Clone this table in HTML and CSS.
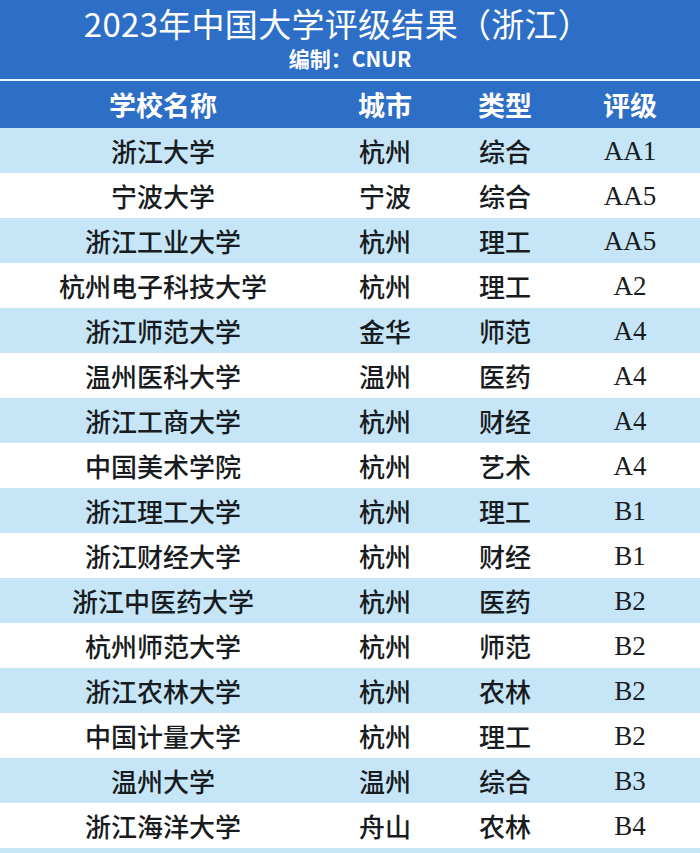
FILE: index.html
```html
<!DOCTYPE html>
<html lang="zh">
<head>
<meta charset="utf-8">
<title>2023年中国大学评级结果（浙江）</title>
<link rel="stylesheet" href="styles.css">
</head>
<body>
<div class="banner">
  <div class="title">2023年中国大学评级结果（浙江）</div>
  <div class="subtitle">编制：CNUR</div>
</div>
<div class="table">
  <div class="row head"><div class="c name">学校名称</div><div class="c city">城市</div><div class="c type">类型</div><div class="c grade">评级</div></div>
  <div class="row"><div class="c name">浙江大学</div><div class="c city">杭州</div><div class="c type">综合</div><div class="c grade">AA1</div></div>
  <div class="row"><div class="c name">宁波大学</div><div class="c city">宁波</div><div class="c type">综合</div><div class="c grade">AA5</div></div>
  <div class="row"><div class="c name">浙江工业大学</div><div class="c city">杭州</div><div class="c type">理工</div><div class="c grade">AA5</div></div>
  <div class="row"><div class="c name">杭州电子科技大学</div><div class="c city">杭州</div><div class="c type">理工</div><div class="c grade">A2</div></div>
  <div class="row"><div class="c name">浙江师范大学</div><div class="c city">金华</div><div class="c type">师范</div><div class="c grade">A4</div></div>
  <div class="row"><div class="c name">温州医科大学</div><div class="c city">温州</div><div class="c type">医药</div><div class="c grade">A4</div></div>
  <div class="row"><div class="c name">浙江工商大学</div><div class="c city">杭州</div><div class="c type">财经</div><div class="c grade">A4</div></div>
  <div class="row"><div class="c name">中国美术学院</div><div class="c city">杭州</div><div class="c type">艺术</div><div class="c grade">A4</div></div>
  <div class="row"><div class="c name">浙江理工大学</div><div class="c city">杭州</div><div class="c type">理工</div><div class="c grade">B1</div></div>
  <div class="row"><div class="c name">浙江财经大学</div><div class="c city">杭州</div><div class="c type">财经</div><div class="c grade">B1</div></div>
  <div class="row"><div class="c name">浙江中医药大学</div><div class="c city">杭州</div><div class="c type">医药</div><div class="c grade">B2</div></div>
  <div class="row"><div class="c name">杭州师范大学</div><div class="c city">杭州</div><div class="c type">师范</div><div class="c grade">B2</div></div>
  <div class="row"><div class="c name">浙江农林大学</div><div class="c city">杭州</div><div class="c type">农林</div><div class="c grade">B2</div></div>
  <div class="row"><div class="c name">中国计量大学</div><div class="c city">杭州</div><div class="c type">理工</div><div class="c grade">B2</div></div>
  <div class="row"><div class="c name">温州大学</div><div class="c city">温州</div><div class="c type">综合</div><div class="c grade">B3</div></div>
  <div class="row"><div class="c name">浙江海洋大学</div><div class="c city">舟山</div><div class="c type">农林</div><div class="c grade">B4</div></div>
  <div class="row"></div>
</div>
</body>
</html>
```
FILE: styles.css
```css
html, body {
  margin: 0;
  padding: 0;
  background: #ffffff;
}
body {
  width: 700px;
  height: 853px;
  overflow: hidden;
  font-family: "Noto Sans CJK SC", "Noto Sans", sans-serif;
  color: #181c20;
}
.banner {
  height: 79px;
  background: #2d6ec6;
  color: #ffffff;
  display: flex;
  flex-direction: column;
  align-items: center;
  border-bottom: 2px solid #e9f3fb;
}
.title {
  font-size: 33px;
  line-height: 36px;
  margin-top: 5px;
  margin-left: -25px;
  font-weight: 400;
  letter-spacing: 0.3px;
}
.subtitle {
  font-size: 21px;
  line-height: 22px;
  margin-top: 6px;
  font-weight: 700;
  font-family: "Noto Sans CJK SC", "Liberation Sans", sans-serif;
}
.table {
  display: flex;
  flex-direction: column;
}
.row {
  display: grid;
  grid-template-columns: 326px 118px 122px 128px 6px;
  height: 45px;
  align-items: center;
  font-size: 26px;
  font-weight: 500;
}
.row:nth-child(even) {
  background: #c6e6f8;
}
.row:nth-child(odd) {
  background: #ffffff;
}
.row.head {
  height: 47px;
  background: #2d6ec6;
  color: #ffffff;
  font-weight: 700;
  font-size: 27px;
}
.c {
  text-align: center;
  line-height: 30px;
}
.grade {
  font-family: "Liberation Serif", "Noto Sans CJK SC", serif;
  font-size: 27px;
  font-weight: 400;
}
.row.head .grade {
  font-family: "Noto Sans CJK SC", sans-serif;
  font-size: 27px;
  font-weight: 700;
}
```
